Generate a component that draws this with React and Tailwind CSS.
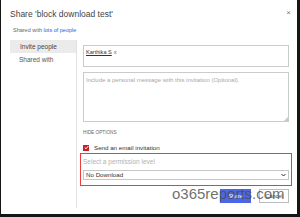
import React from "react";

function Checkbox() {
  return (
    <div className="w-[6px] h-[6px] bg-[#c8202b] flex items-center justify-center">
      <svg width="5" height="5" viewBox="0 0 10 10">
        <path d="M1.5 5.2 L4 7.6 L8.6 2.2" stroke="#fff" strokeWidth="2" fill="none" />
      </svg>
    </div>
  );
}

function ShareDialog() {
  return (
    <div className="relative w-[300px] h-[217px] bg-white border-l border-r-[3px] border-b-[3px] border-[#151515] box-border overflow-hidden font-['Liberation_Sans',Arial,sans-serif]">
      {/* Header */}
      <div className="pl-[9px] pt-[8px] pr-[6px] flex justify-between">
        <h1 className="text-[8.5px] leading-[12px] text-[#444]">Share 'block download test'</h1>
        <span className="text-[8px] leading-[8px] text-[#777] mt-[1px]">×</span>
      </div>
      <p className="ml-[12px] mt-[7px] text-[5.5px] leading-[7px] text-[#666]">
        Shared with <span className="text-[#2a5fd0]">lots of people</span>
      </p>

      {/* Body */}
      <div className="flex mt-[6px] ml-[9px]">
        {/* Nav */}
        <div className="w-[67px] h-[168px] border-r border-[#e2e2e2]">
          <div className="h-[13px] w-[66px] bg-[#ebebeb] pl-[10px] text-[6.5px] leading-[13px] text-[#444]">Invite people</div>
          <div className="h-[13px] pl-[9px] text-[6.5px] leading-[13px] text-[#555]">Shared with</div>
        </div>

        {/* Content */}
        <div className="pl-[6px] w-[212px]">
          <div className="mt-[5px] h-[22px] border border-[#cbcbcb] px-[2px] pt-[3px] flex items-start gap-[2px] text-[5.6px] leading-[7px]">
            <span className="text-[#333] underline">Karthika S</span>
            <span className="text-[#2a5fd0]">x</span>
          </div>
          <div className="relative mt-[5px] h-[50px] border border-[#cbcbcb] px-[2px] pt-[3px]">
            <p className="text-[6px] leading-[8px] text-[#a8a8a8]">Include a personal message with this invitation (Optional).</p>
            <svg className="absolute right-0 bottom-0" width="4" height="4" viewBox="0 0 4 4">
              <path d="M4 0 L4 4 L0 4 Z" fill="#c8c8c8" />
            </svg>
          </div>
          <p className="mt-[8px] text-[4.7px] leading-[6px] text-[#666]">HIDE OPTIONS</p>
          <div className="mt-[8px] h-[7px] flex items-center gap-[5px]">
            <Checkbox />
            <span className="text-[6.2px] leading-[7px] text-[#333]">Send an email invitation</span>
          </div>
          <div className="mt-[2px] -mx-[3px] h-[33px] border border-[#ee3b3b] px-[2px] pt-[4px]">
            <p className="text-[6.5px] leading-[8px] text-[#b2b2b2]">Select a permission level</p>
            <div className="mt-[4px] h-[10px] border border-[#c6c6c6] flex items-center justify-between px-[2px]">
              <span className="text-[6.2px] leading-[8px] text-[#333]">No Download</span>
              <svg width="5" height="4" viewBox="0 0 10 8">
                <path d="M1 2 L5 6 L9 2" stroke="#333" strokeWidth="2" fill="none" />
              </svg>
            </div>
          </div>
          <div className="mt-[3px] flex justify-end gap-[8px]">
            <button className="w-[31px] h-[14px] bg-[#4d67e4] text-white text-[5.5px] leading-[14px]">Share</button>
            <button className="w-[30px] h-[14px] bg-white border border-[#bdbdbd] text-[#444] text-[5.5px] leading-[12px]">Cancel</button>
          </div>
        </div>
      </div>

      {/* Watermark */}
      <div className="absolute left-[171px] top-[185px] text-[15px] leading-[17px] text-[#4a4a4a]/80 pointer-events-none">
        o365reports.com
      </div>
    </div>
  );
}

export default function App() {
  return <ShareDialog />;
}
